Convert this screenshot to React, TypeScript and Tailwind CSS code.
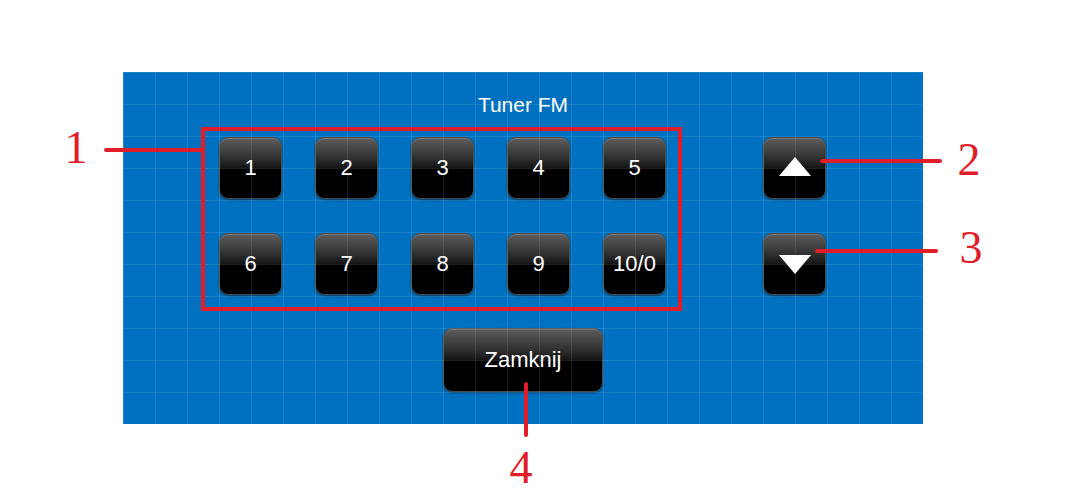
import React from "react";

const btnBase =
  "relative flex items-center justify-center rounded-[9px] border border-[#4a4a4a] bg-[linear-gradient(to_bottom,#5c5c5c_0%,#2e2e2e_35%,#141414_50%,#000000_51%,#000000_100%)] shadow-[0_1px_2px_rgba(0,0,0,0.5),inset_0_1px_0_rgba(255,255,255,0.18)] text-white";

function Key({ label }: { label: string }) {
  return (
    <div className={`${btnBase} w-[63px] h-[62px] text-[22px]`}>
      <span className="leading-none">{label}</span>
    </div>
  );
}

function ArrowKey({ up }: { up: boolean }) {
  return (
    <div className={`${btnBase} w-[63px] h-[62px]`}>
      <svg width="32" height="19" viewBox="0 0 32 19" className={up ? "-mt-[3px]" : "mt-[1px]"}>
        {up ? (
          <polygon points="16,0 32,19 0,19" fill="#ffffff" />
        ) : (
          <polygon points="0,0 32,0 16,19" fill="#ffffff" />
        )}
      </svg>
    </div>
  );
}

export default function App() {
  const row1 = ["1", "2", "3", "4", "5"];
  const row2 = ["6", "7", "8", "9", "10/0"];
  const red = "bg-[#e11d2a]";
  return (
    <div
      className="relative w-[1077px] h-[502px] bg-white overflow-hidden"
      style={{ fontFamily: '"Liberation Sans", Arial, sans-serif' }}
    >
      <div className="pt-[72px] pl-[123px]">
        <div className="relative w-[800px] h-[352px] bg-[#0070c0] flex flex-col">
          <div className="h-[65px] flex items-center justify-center text-white text-[21px]">
            Tuner FM
          </div>
          <div className="flex pl-[96px]">
            <div className="grid grid-cols-5 gap-x-[33px] gap-y-[34px]">
              {row1.map((l) => (
                <Key key={l} label={l} />
              ))}
              {row2.map((l) => (
                <Key key={l} label={l} />
              ))}
            </div>
            <div className="ml-[97px] flex flex-col gap-[34px]">
              <ArrowKey up />
              <ArrowKey up={false} />
            </div>
          </div>
          <div className="mt-[33px] flex justify-center">
            <div className={`${btnBase} w-[160px] h-[64px] text-[22px]`}>
              <span className="leading-none">Zamknij</span>
            </div>
          </div>
          {/* grid overlay */}
          <div className="pointer-events-none absolute inset-0 bg-[linear-gradient(to_right,rgba(255,255,255,0.11)_1px,transparent_1px),linear-gradient(to_bottom,rgba(255,255,255,0.11)_1px,transparent_1px)] bg-[size:32px_32px]" />
        </div>
      </div>

      {/* annotations */}
      <div className="absolute left-[201px] top-[127px] w-[481px] h-[184px] border-[4px] border-[#e11d2a]" />
      <div className={`absolute left-[104px] top-[148px] w-[99px] h-[4px] rounded-full ${red}`} />
      <div className={`absolute left-[820px] top-[159px] w-[122px] h-[4px] rounded-full ${red}`} />
      <div className={`absolute left-[815px] top-[249px] w-[123px] h-[4px] rounded-full ${red}`} />
      <div className={`absolute left-[524px] top-[382px] w-[4px] h-[55px] rounded-full ${red}`} />

      <div
        className="absolute left-[56px] top-[125px] w-[40px] text-center text-[46px] leading-none text-[#e11d2a]"
        style={{ fontFamily: '"Liberation Serif", "Times New Roman", serif' }}
      >
        1
      </div>
      <div
        className="absolute left-[949px] top-[137px] w-[40px] text-center text-[46px] leading-none text-[#e11d2a]"
        style={{ fontFamily: '"Liberation Serif", "Times New Roman", serif' }}
      >
        2
      </div>
      <div
        className="absolute left-[951px] top-[225px] w-[40px] text-center text-[46px] leading-none text-[#e11d2a]"
        style={{ fontFamily: '"Liberation Serif", "Times New Roman", serif' }}
      >
        3
      </div>
      <div
        className="absolute left-[501px] top-[445px] w-[40px] text-center text-[46px] leading-none text-[#e11d2a]"
        style={{ fontFamily: '"Liberation Serif", "Times New Roman", serif' }}
      >
        4
      </div>
    </div>
  );
}
